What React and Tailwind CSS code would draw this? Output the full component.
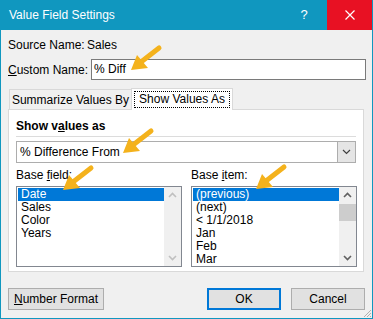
import React from 'react';

const font = { fontFamily: '"Liberation Sans", Arial, sans-serif' };

function Arrow({ x, y }) {
  // tip at (x, y), tail up-right
  return (
    <svg className="absolute pointer-events-none" style={{ left: x - 2, top: y - 26 }} width="34" height="30" viewBox="0 0 34 30">
      <path d="M30 4 L12 18" stroke="#f4b21c" strokeWidth="5" strokeLinecap="round" />
      <path d="M2 26 L8 11 L19 24 Z" fill="#f4b21c" />
    </svg>
  );
}

function ScrollArrow({ up, dark }) {
  return (
    <svg width="9" height="6" viewBox="0 0 9 6">
      <path d={up ? 'M1 5 L4.5 1.5 L8 5' : 'M1 1 L4.5 4.5 L8 1'} stroke={dark ? '#606060' : '#c0c0c0'} strokeWidth="1.6" fill="none" />
    </svg>
  );
}

function ListBox({ items, thumb }) {
  return (
    <div className="flex w-[166px] h-[81px] border border-[#828790] bg-white overflow-hidden">
      <div className="flex-1 flex flex-col pt-px pl-px">
        {items.map((it, i) => (
          <div key={it} className={`h-[13px] leading-[13px] pl-[3px] shrink-0 ${i === 0 ? 'bg-[#0078d7] text-white' : 'text-black'}`}>{it}</div>
        ))}
      </div>
      <div className="relative w-[17px] bg-[#f0f0f0] flex flex-col items-center justify-between py-[5px]">
        <ScrollArrow up dark={thumb} />
        {thumb && <div className="absolute left-0 top-[17px] w-[17px] h-[17px] bg-[#cdcdcd]" />}
        <ScrollArrow dark={thumb} />
      </div>
    </div>
  );
}

export default function App() {
  return (
    <div className="relative w-[373px] h-[319px] bg-[#f0f0f0] border-x border-b border-[#1097bf] text-[12px] text-black overflow-hidden whitespace-nowrap" style={font}>
      {/* Title bar */}
      <div className="flex h-[30px] bg-[#1097bf] text-white -mx-px">
        <div className="flex-1 pl-[9px] leading-[30px] text-[12px]">Value Field Settings</div>
        <div className="w-[46px] text-center leading-[30px] text-[13px]">?</div>
        <div className="w-[46px] bg-[#e81123] flex items-center justify-center">
          <svg width="10" height="10" viewBox="0 0 10 10"><path d="M0.5 0.5 L9.5 9.5 M9.5 0.5 L0.5 9.5" stroke="white" strokeWidth="1.2" /></svg>
        </div>
      </div>

      <div className="pl-[7px] pr-[6px]">
        <div className="flex h-[14px] mt-[8px] leading-[14px]">
          <span className="w-[79px] shrink-0">Source Name:</span>
          <span>Sales</span>
        </div>
        <div className="flex items-center h-[21px] mt-[7px]">
          <span className="w-[83px] shrink-0"><span className="underline">C</span>ustom Name:</span>
          <div className="flex-1 h-[21px] border border-[#7a7a7a] bg-white pl-[2px] leading-[19px]">% Diff</div>
        </div>

        {/* Tabs */}
        <div className="flex items-end mt-[8px] h-[21px]">
          <div className="ml-[1px] h-[20px] w-[122px] border-t border-l border-[#d9d9d9] bg-[#f0f0f0] flex items-center justify-center">
            Summarize Values By
          </div>
          <div className="h-[22px] w-[102px] border-t border-x border-[#d9d9d9] bg-white flex items-center justify-center -mb-px relative z-10">
            <span className="outline outline-1 outline-dotted outline-black px-[4px] leading-[15px]">Show Values As</span>
          </div>
        </div>

        {/* Panel */}
        <div className="w-[356px] h-[163px] border border-[#d9d9d9] bg-white px-[7px]">
          <div className="font-bold mt-[9px] h-[14px] leading-[14px]">Show v<span className="underline">a</span>lues as</div>
          <div className="h-px bg-[#dcdcdc] mt-[3px]" />
          <div className="flex h-[22px] mt-[4px] border border-[#adadad] bg-white">
            <div className="flex-1 pl-[3px] leading-[20px]">% Difference From</div>
            <div className="w-[18px] bg-[#e5e5e5] border-l border-[#adadad] flex items-center justify-center">
              <svg width="9" height="6" viewBox="0 0 9 6"><path d="M1 1 L4.5 4.5 L8 1" stroke="#404040" strokeWidth="1.2" fill="none" /></svg>
            </div>
          </div>
          <div className="flex mt-[5px] gap-[9px]">
            <div className="flex flex-col">
              <div className="h-[14px] leading-[14px] mb-[4px]">Base <span className="underline">f</span>ield:</div>
              <ListBox items={['Date', 'Sales', 'Color', 'Years']} />
            </div>
            <div className="flex flex-col">
              <div className="h-[14px] leading-[14px] mb-[4px]">Base <span className="underline">i</span>tem:</div>
              <ListBox items={['(previous)', '(next)', '< 1/1/2018', 'Jan', 'Feb', 'Mar']} thumb />
            </div>
          </div>
        </div>

        {/* Buttons */}
        <div className="flex mt-[16px] h-[22px]">
          <button className="w-[96px] h-[22px] border border-[#adadad] bg-[#e1e1e1]"><span className="underline">N</span>umber Format</button>
          <button className="ml-auto w-[74px] h-[22px] border-2 border-[#0078d7] bg-[#e1e1e1]">OK</button>
          <button className="ml-[10px] mr-[1px] w-[74px] h-[22px] border border-[#adadad] bg-[#e1e1e1]">Cancel</button>
        </div>
      </div>

      {/* Resize grip */}
      <svg className="absolute right-0 bottom-0" width="10" height="10" viewBox="0 0 10 10">
        <path d="M9 2 L2 9 M9 5 L5 9 M9 8 L8 9" stroke="#b0b0b0" strokeWidth="1" />
      </svg>

      <Arrow x={130} y={70} />
      <Arrow x={122} y={153} />
      <Arrow x={62} y={190} />
      <Arrow x={255} y={189} />
    </div>
  );
}
